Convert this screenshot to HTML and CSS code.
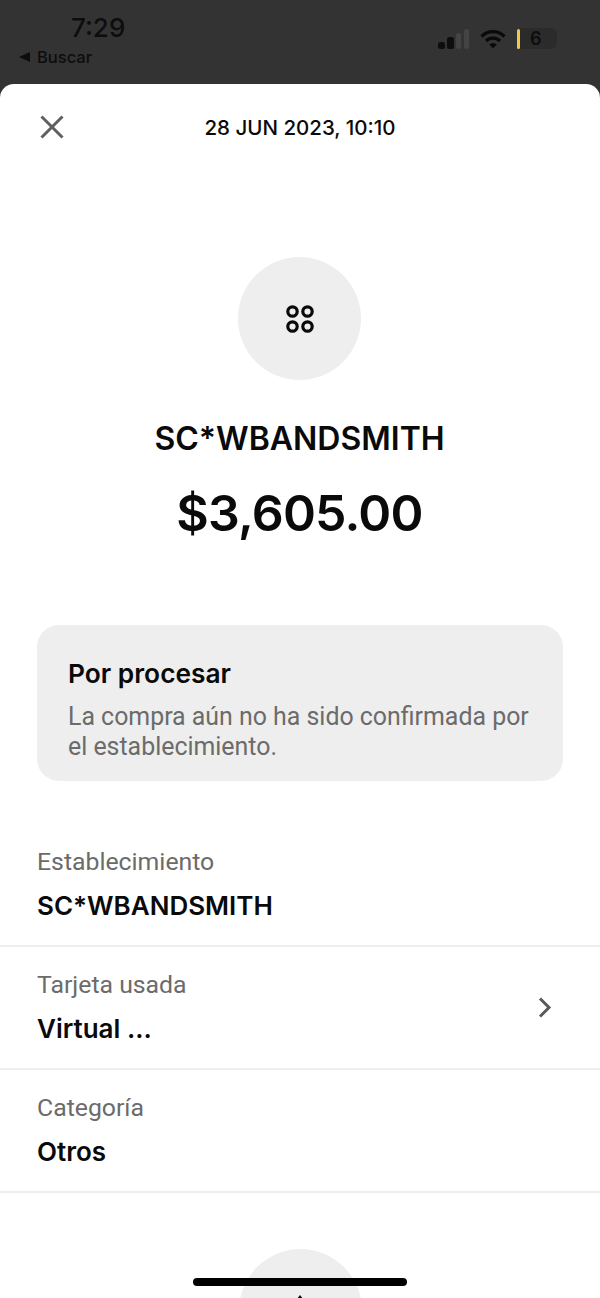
FILE: index.html
```html
<!DOCTYPE html>
<html lang="es">
  <head>
    <meta charset="UTF-8" />
    <title>Detalle de compra</title>
    <link rel="stylesheet" href="styles.css">
  </head>
  <body>
    <div class="status">
      <div class="status-left">
        <p class="time">7:29</p>
        <p class="back"><span class="back-arrow"></span>Buscar</p>
      </div>
      <div class="status-right">
        <svg class="signal" width="32" height="20" viewBox="0 0 32 20">
          <rect x="0" y="13" width="7" height="7" rx="2.5" fill="#0d0d0d" />
          <rect x="9" y="8" width="7" height="12" rx="2.5" fill="#0d0d0d" />
          <rect x="18" y="4" width="5" height="16" rx="2.5" fill="#444" />
          <rect x="26" y="0" width="5" height="20" rx="2.5" fill="#444" />
        </svg>
        <svg class="wifi" width="26" height="20" viewBox="0 0 26 20">
          <path d="M1.5 7.5 C8 1 18 1 24.5 7.5" fill="none" stroke="#0a0a0a" stroke-width="3.2" />
          <path d="M6 12 C10 8.2 16 8.2 20 12" fill="none" stroke="#0a0a0a" stroke-width="3.2" />
          <path d="M9.3 15.6 C11.6 13.6 14.4 13.6 16.7 15.6 L13 19.5 Z" fill="#0a0a0a" />
        </svg>
        <div class="battery"><span class="battery-level"></span><span class="battery-num">6</span></div>
      </div>
    </div>

    <div class="sheet">
      <div class="top">
        <svg class="close" width="24" height="24" viewBox="0 0 24 24">
          <path d="M1.5 1.5 L22.5 22.5 M22.5 1.5 L1.5 22.5" fill="none" stroke="#5f5f5f" stroke-width="3" />
        </svg>
        <p class="date">28 JUN 2023, 10:10</p>
      </div>

      <div class="merchant">
        <div class="circle">
          <svg width="28" height="28" viewBox="0 0 28 28">
            <g fill="none" stroke="#0a0a0a" stroke-width="3.2">
              <circle cx="6.5" cy="6.5" r="4.7" />
              <circle cx="21.5" cy="6.5" r="4.7" />
              <circle cx="6.5" cy="21.5" r="4.7" />
              <circle cx="21.5" cy="21.5" r="4.7" />
            </g>
          </svg>
        </div>
        <h1 class="name">SC*WBANDSMITH</h1>
        <p class="amount">$3,605.00</p>
      </div>

      <div class="notice">
        <p class="notice-title">Por procesar</p>
        <p class="notice-text">La compra aún no ha sido confirmada por el establecimiento.</p>
      </div>

      <div class="rows">
        <div class="row">
          <div>
            <p class="label">Establecimiento</p>
            <p class="value">SC*WBANDSMITH</p>
          </div>
        </div>
        <div class="row">
          <div>
            <p class="label">Tarjeta usada</p>
            <p class="value">Virtual ...</p>
          </div>
          <svg width="14" height="21" viewBox="0 0 14 21">
            <path d="M2 1.5 L11 10.5 L2 19.5" fill="none" stroke="#5a5a5a" stroke-width="3" />
          </svg>
        </div>
        <div class="row">
          <div>
            <p class="label">Categoría</p>
            <p class="value">Otros</p>
          </div>
        </div>
      </div>

      <div class="circle circle-bottom">
        <svg width="16" height="8" viewBox="0 0 16 8">
          <path d="M8 0 L14 8 L2 8 Z" fill="#0a0a0a" />
        </svg>
      </div>
    </div>

    <div class="home-bar"></div>
  </body>
</html>
```

FILE: styles.css
```css
html,
body {
  margin: 0;
  height: 1298px;
  overflow: hidden;
  background: #333333;
  font-family: Inter, 'Liberation Sans', sans-serif;
}
* {
  box-sizing: border-box;
}
p,
h1 {
  margin: 0;
  padding: 0;
}
.status {
  height: 84px;
  display: flex;
  justify-content: space-between;
  align-items: flex-start;
  color: #0d0d0d;
}
.status-left {
  padding: 13px 0 0 19px;
}
.time {
  padding-left: 52px;
  font-size: 26px;
  line-height: 30px;
  font-weight: 500;
}
.back {
  display: flex;
  align-items: center;
  gap: 7px;
  margin-top: 4px;
  font-size: 16.5px;
  line-height: 20px;
  font-weight: 500;
}
.back-arrow {
  border-right: 11px solid #0d0d0d;
  border-top: 5.5px solid transparent;
  border-bottom: 5.5px solid transparent;
}
.status-right {
  display: flex;
  align-items: center;
  gap: 11px;
  padding: 28px 43px 0 0;
}
.wifi {
  margin-left: -1px;
}
.battery {
  display: flex;
  align-items: center;
  width: 40px;
  height: 21px;
  border-radius: 6px;
  background: #2b2b2b;
}
.battery-level {
  width: 3px;
  height: 20px;
  border-radius: 2px;
  background: #f0c84b;
}
.battery-num {
  margin-left: 10px;
  font-size: 18px;
  font-weight: 600;
}
.sheet {
  height: 1214px;
  border-radius: 14px 14px 0 0;
  background: #ffffff;
  overflow: hidden;
}
.top {
  position: relative;
  height: 87px;
  display: flex;
  align-items: center;
  justify-content: center;
}
.close {
  position: absolute;
  left: 40px;
  top: 31px;
}
.date {
  font-size: 20.5px;
  font-weight: 500;
  color: #0a0a0a;
}
.merchant {
  display: flex;
  flex-direction: column;
  align-items: center;
  padding: 86px 1px 0 0;
}
.circle {
  width: 123px;
  height: 123px;
  border-radius: 50%;
  background: #eeeeee;
  display: flex;
  align-items: center;
  justify-content: center;
}
.name {
  margin-top: 39px;
  font-size: 32px;
  line-height: 40px;
  font-weight: 600;
  color: #0a0a0a;
}
.amount {
  margin-top: 24px;
  font-size: 50px;
  line-height: 60px;
  font-weight: 600;
  letter-spacing: -0.8px;
  color: #0a0a0a;
}
.notice {
  margin: 82px 37px 0;
  height: 156px;
  padding: 33px 31px 0;
  border-radius: 22px;
  background: #eeeeee;
}
.notice-title {
  font-size: 26.3px;
  line-height: 32px;
  font-weight: 600;
  color: #0a0a0a;
}
.notice-text {
  margin-top: 12px;
  font-family: Roboto, 'Liberation Sans', sans-serif;
  font-size: 24.9px;
  line-height: 30px;
  color: #6b6b6b;
}
.rows {
  margin-top: 43px;
}
.row {
  height: 123px;
  padding: 23px 48px 0 37px;
  border-bottom: 2px solid #eeeeee;
  display: flex;
  justify-content: space-between;
  align-items: flex-start;
}
.row svg {
  margin-top: 27px;
}
.label {
  font-family: Roboto, 'Liberation Sans', sans-serif;
  font-size: 24.8px;
  line-height: 30px;
  color: #6b6b6b;
}
.value {
  margin-top: 13px;
  font-size: 26px;
  line-height: 32px;
  font-weight: 600;
  color: #0a0a0a;
}
.circle-bottom {
  margin: 56px auto 0;
  padding-top: 46px;
  align-items: flex-start;
}
.home-bar {
  position: absolute;
  left: 193px;
  top: 1278px;
  width: 214px;
  height: 8px;
  border-radius: 4px;
  background: #000000;
}
```
